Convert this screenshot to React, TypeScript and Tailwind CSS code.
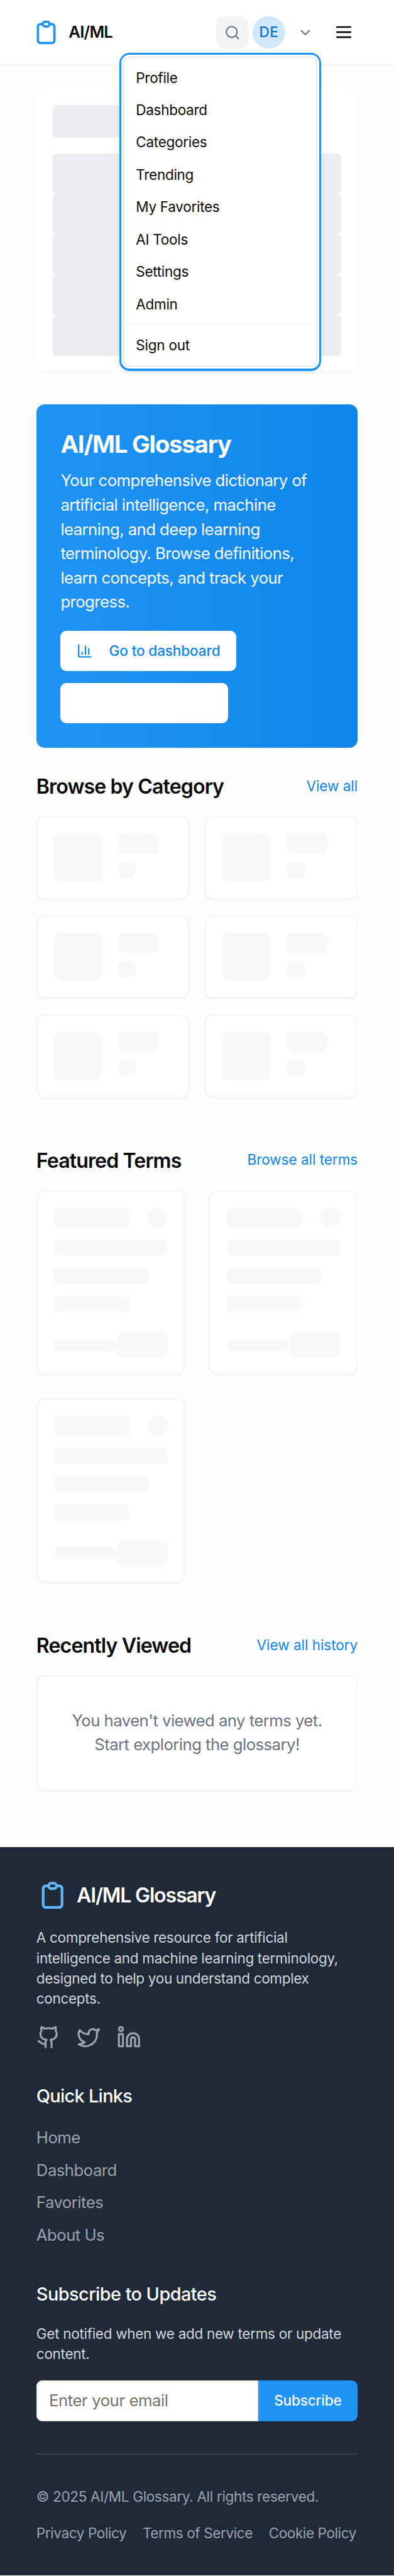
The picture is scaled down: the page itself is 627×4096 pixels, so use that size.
import { ChartColumn, ChevronDown, Github, Linkedin, Search, Twitter } from "lucide-react";

const menuItems = ["Profile", "Dashboard", "Categories", "Trending", "My Favorites", "AI Tools", "Settings", "Admin"];
const quickLinks = ["Home", "Dashboard", "Favorites", "About Us"];
const legalLinks = ["Privacy Policy", "Terms of Service", "Cookie Policy"];

function ClipboardIcon({ className }: { className: string }) {
  return (
    <svg className={className} viewBox="0 0 24 24" fill="none" stroke="currentColor" strokeWidth={2} strokeLinecap="round" strokeLinejoin="round">
      <path d="M9 5H7a2 2 0 00-2 2v12a2 2 0 002 2h10a2 2 0 002-2V7a2 2 0 00-2-2h-2M9 5a2 2 0 002 2h2a2 2 0 002-2M9 5a2 2 0 012-2h2a2 2 0 012 2" />
    </svg>
  );
}

function MenuIcon() {
  return (
    <svg className="size-5" viewBox="0 0 24 24" fill="none" stroke="currentColor" strokeWidth={2} strokeLinecap="round">
      <path d="M4 6h16M4 12h16M4 18h16" />
    </svg>
  );
}

function UserMenu() {
  return (
    <div className="absolute top-[52px] left-[118px] z-20 rounded-[10px] bg-[#2094f3] p-[2px] shadow-[0_2px_6px_-1px_rgb(0_0_0/0.08)]">
      <div className="rounded-lg bg-white p-[2px]">
        <div className="w-48 rounded-md bg-white py-[5px] inset-ring inset-ring-[#e5e5e5]">
          {menuItems.map((item) => (
            <div key={item} className="px-[12.6px] py-1.5 text-sm tracking-[-0.012em]">{item}</div>
          ))}
          <div className="mx-px my-1 h-px bg-[#f5f5f4]" />
          <div className="px-[12.6px] py-1.5 text-sm tracking-[-0.01em]">Sign out</div>
        </div>
      </div>
    </div>
  );
}

function Header() {
  return (
    <header className="relative flex h-16 items-center bg-white pr-10 pl-8 shadow-xs">
      <ClipboardIcon className="size-7 text-[#2094f3]" />
      <span className="ml-2 text-base font-semibold tracking-[-0.031em]">AI/ML</span>
      <div className="ml-auto flex items-center">
        <button className="flex size-8 items-center justify-center rounded-lg bg-gray-100 text-[#6b7280]">
          <Search className="size-4" />
        </button>
        <span className="ml-1 flex size-8 items-center justify-center rounded-full bg-[#d0e7fc] text-sm font-medium tracking-[0.02em] text-[#0a76cd]">DE</span>
        <ChevronDown className="ml-3 size-4 text-[#6b7280]" />
        <span className="ml-5"><MenuIcon /></span>
      </div>
      <UserMenu />
    </header>
  );
}

function LoadingPanel() {
  return (
    <div className="rounded-lg bg-white p-4 shadow-[0_1px_2px_0_rgb(0_0_0/0.03)]">
      <div className="h-8 w-1/3 rounded-sm bg-[#ebedf1]" />
      <div className="mt-4">
        {[0, 1, 2, 3, 4].map((i) => (
          <div key={i} className="h-10 rounded-sm bg-[#ebedf1]" />
        ))}
      </div>
    </div>
  );
}

function Hero() {
  return (
    <section className="mt-8 rounded-lg bg-linear-to-r from-[#2094f3] to-[#0c86ea] p-6 text-white shadow-xs">
      <h1 className="text-2xl leading-8 font-bold tracking-[-0.034em]">AI/ML Glossary</h1>
      <p className="mt-2 text-base leading-6 tracking-[-0.022em] whitespace-nowrap">
        Your comprehensive dictionary of<br />artificial intelligence, machine<br />learning, and deep learning<br />
        terminology. Browse definitions,<br />learn concepts, and track your<br />progress.
      </p>
      <button className="mt-4 flex h-10 w-[174px] items-center gap-4 rounded-md bg-white pl-4 text-sm font-medium tracking-[-0.004em] whitespace-nowrap text-[#0c84e8]">
        <ChartColumn className="size-4" />
        Go to dashboard
      </button>
      <button className="mt-3 block h-10 w-[166px] rounded-md bg-white" />
    </section>
  );
}

function SectionHeading({ title, link }: { title: string; link: string }) {
  return (
    <div className="flex h-7 items-center justify-between whitespace-nowrap">
      <h2 className="pt-px text-xl leading-7 font-semibold tracking-[-0.028em]">{title}</h2>
      <a className="text-sm tracking-[-0.001em] text-[#0c86ea]">{link}</a>
    </div>
  );
}

function CategoryCard() {
  return (
    <div className="flex gap-4 rounded-lg bg-white p-[17px] shadow-xs inset-ring inset-ring-[#f3f3f3]">
      <div className="size-12 shrink-0 rounded-lg bg-[#f8f8f7]" />
      <div className="grow">
        <div className="h-5 w-3/4 rounded-md bg-[#f8f8f7]" />
        <div className="mt-2 h-4 w-1/3 rounded-md bg-[#f8f8f7]" />
      </div>
    </div>
  );
}

function TermCard() {
  return (
    <div className="rounded-lg bg-white p-[17px] shadow-xs inset-ring inset-ring-[#f3f3f3]">
      <div className="flex justify-between">
        <div className="h-5 w-2/3 rounded-md bg-[#f8f8f7]" />
        <div className="size-5 rounded-full bg-[#f8f8f7]" />
      </div>
      <div className="mt-3 h-4 w-full rounded-md bg-[#f8f8f7]" />
      <div className="mt-3 h-4 w-5/6 rounded-md bg-[#f8f8f7]" />
      <div className="mt-3 h-4 w-2/3 rounded-md bg-[#f8f8f7]" />
      <div className="mt-5 flex items-center">
        <div className="h-3 w-20 rounded-md bg-[#f8f8f7]" />
        <div className="h-6 w-16 rounded-md bg-[#f8f8f7]" />
      </div>
    </div>
  );
}

function Footer() {
  return (
    <footer className="mt-14 bg-[#1f2937] px-9 py-8 text-sm text-[#9ca3af]">
      <div className="flex items-center gap-2">
        <ClipboardIcon className="size-8 text-[#64b5f6]" />
        <span className="pt-px text-xl font-semibold tracking-[-0.038em] text-white">AI/ML Glossary</span>
      </div>
      <p className="mt-4 tracking-[-0.014em] whitespace-nowrap text-[#d1d5db]">
        A comprehensive resource for artificial<br />intelligence and machine learning terminology,<br />
        designed to help you understand complex<br />concepts.
      </p>
      <div className="mt-4 flex gap-4">
        <Github className="size-6" />
        <Twitter className="size-6" />
        <Linkedin className="size-6" />
      </div>
      <h3 className="mt-8 text-lg leading-7 font-medium tracking-[-0.025em] text-white">Quick Links</h3>
      <ul className="mt-4 flex flex-col gap-2 text-base leading-6 tracking-[-0.02em]">
        {quickLinks.map((link) => <li key={link}>{link}</li>)}
      </ul>
      <h3 className="mt-8 text-lg leading-7 font-medium tracking-[-0.02em] text-white">Subscribe to Updates</h3>
      <p className="mt-4 tracking-[-0.013em] whitespace-nowrap text-[#d1d5db]">Get notified when we add new terms or update<br />content.</p>
      <div className="mt-4 flex h-10">
        <div className="flex grow items-center rounded-l-md bg-white px-[12.6px] text-base tracking-[-0.017em] text-[#78716c] inset-ring inset-ring-[#e7e5e4]">Enter your email</div>
        <button className="w-[98.6px] rounded-r-md bg-[#2094f3] text-sm font-medium tracking-[-0.007em] text-white">Subscribe</button>
      </div>
      <div className="mt-8 h-px bg-[#374151]" />
      <p className="mt-8 tracking-[-0.014em] whitespace-nowrap">© 2025 AI/ML Glossary. All rights reserved.</p>
      <div className="mt-4 flex gap-4 tracking-[-0.017em] whitespace-nowrap">
        {legalLinks.map((link) => <a key={link}>{link}</a>)}
      </div>
    </footer>
  );
}

export default function App() {
  return (
    <div className="[zoom:1.6069] bg-[#fefefe] font-['Inter',sans-serif] text-[#0c0a09]">
      <Header />
      <main className="px-9 pt-6">
        <LoadingPanel />
        <Hero />
        <section className="mt-6">
          <SectionHeading title="Browse by Category" link="View all" />
          <div className="mt-4 grid grid-cols-2 gap-4">
            {[0, 1, 2, 3, 4, 5].map((i) => <CategoryCard key={i} />)}
          </div>
        </section>
        <section className="mt-12">
          <SectionHeading title="Featured Terms" link="Browse all terms" />
          <div className="mt-4 grid grid-cols-2 gap-6">
            {[0, 1, 2].map((i) => <TermCard key={i} />)}
          </div>
        </section>
        <section className="mt-12">
          <SectionHeading title="Recently Viewed" link="View all history" />
          <div className="mt-4 rounded-lg bg-white py-[33px] text-center text-base leading-6 tracking-[-0.021em] text-[#6b7280] shadow-xs inset-ring inset-ring-[#f3f3f3]">
            You haven't viewed any terms yet.<br />Start exploring the glossary!
          </div>
        </section>
      </main>
      <Footer />
    </div>
  );
}
